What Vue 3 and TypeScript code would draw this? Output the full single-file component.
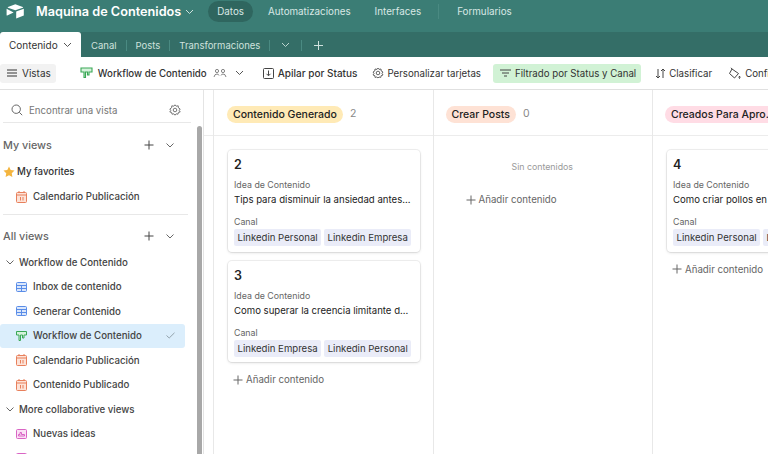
<script setup lang="ts">
interface Card {
  id: number
  idea: string
  canales: string[]
}

interface Column {
  name: string
  count: number
  color: string
  cards: Card[]
}

const columns: Column[] = [
  {
    name: 'Contenido Generado',
    count: 2,
    color: '#ffeab6',
    cards: [
      { id: 2, idea: 'Tips para disminuir la ansiedad antes...', canales: ['Linkedin Personal', 'Linkedin Empresa'] },
      { id: 3, idea: 'Como superar la creencia limitante d...', canales: ['Linkedin Empresa', 'Linkedin Personal'] },
    ],
  },
  { name: 'Crear Posts', count: 0, color: '#fee2d5', cards: [] },
  {
    name: 'Creados Para Aprobación',
    count: 1,
    color: '#ffdce5',
    cards: [{ id: 4, idea: 'Como criar pollos en casa sin experiencia previa', canales: ['Linkedin Personal', 'Linkedin Empresa'] }],
  },
]

const viewsA = [
  { icon: 'grid', label: 'Inbox de contenido' },
  { icon: 'grid', label: 'Generar Contenido' },
  { icon: 'kanban', label: 'Workflow de Contenido', active: true },
  { icon: 'cal', label: 'Calendario Publicación' },
  { icon: 'cal', label: 'Contenido Publicado' },
]
</script>

<template>
  <div class="app">
    <header class="top">
      <svg class="logo" width="19" height="15" viewBox="0 0 19 15">
        <path d="M9.3 0.3 L2 3 Q1.2 3.4 2 3.7 L9.3 6.3 L16.8 3.7 Q17.6 3.4 16.8 3 Z" fill="#fff" />
        <path d="M10.2 7.6 L10.2 14.4 L17.8 11.4 L17.8 4.8 Z" fill="#fff" />
        <path d="M0.6 4.8 L0.6 11.2 Q0.6 11.8 1.2 11.5 L7.6 8.4 Z" fill="#fff" />
      </svg>
      <span class="base-name">Maquina de Contenidos</span>
      <svg class="chev" width="9" height="6" viewBox="0 0 9 6"><path d="M1 1 L4.5 4.5 L8 1" fill="none" stroke="#cfe2de" stroke-width="1" /></svg>
      <nav class="top-nav">
        <span class="nav-item current">Datos</span>
        <span class="nav-item first">Automatizaciones</span>
        <span class="nav-item">Interfaces</span>
        <span class="nav-sep"></span>
        <span class="nav-item">Formularios</span>
      </nav>
    </header>

    <div class="tabs">
      <div class="tab active">
        Contenido
        <svg width="9" height="6" viewBox="0 0 9 6"><path d="M1 1 L4.5 4.5 L8 1" fill="none" stroke="#555" stroke-width="1" /></svg>
      </div>
      <span class="tab first-tab">Canal</span><i class="tab-sep"></i>
      <span class="tab">Posts</span><i class="tab-sep"></i>
      <span class="tab">Transformaciones</span><i class="tab-sep"></i>
      <span class="tab tab-icon"><svg width="9" height="6" viewBox="0 0 9 6"><path d="M1 1 L4.5 4.5 L8 1" fill="none" stroke="#bcd5d0" stroke-width="1" /></svg></span><i class="tab-sep"></i>
      <span class="tab tab-icon"><svg width="11" height="11" viewBox="0 0 11 11"><path d="M5.5 1 V10 M1 5.5 H10" stroke="#cfe2de" stroke-width="1" /></svg></span>
    </div>

    <div class="toolbar">
      <div class="tool views-btn">
        <svg width="10" height="8" viewBox="0 0 10 8"><path d="M0 1 H10 M0 4 H10 M0 7 H10" stroke="#333" stroke-width="1" /></svg>
        Vistas
      </div>
      <i class="tool-sep"></i>
      <div class="tool workflow">
        <svg width="13" height="12" viewBox="0 0 13 12"><path d="M1 1 H12 V5 H9 V8 H7.5 V5 H5.5 V10.5 H4 V5 H1 Z" fill="#d6f2dc" stroke="#3aa856" stroke-width="1.1" /></svg>
        <span class="tool-strong">Workflow de Contenido</span>
        <svg class="people" width="14" height="11" viewBox="0 0 14 11" fill="none" stroke="#666" stroke-width="0.8"><circle cx="4" cy="3" r="1.6" /><circle cx="10" cy="3" r="1.6" /><path d="M1 9 Q1.5 6 4 6 Q5.5 6 6 7.5 M8 7.5 Q8.5 6 10 6 Q12.5 6 13 9" /></svg>
        <svg class="people-chev" width="9" height="6" viewBox="0 0 9 6"><path d="M1 1 L4.5 4.5 L8 1" fill="none" stroke="#555" stroke-width="1" /></svg>
      </div>
      <div class="tool stack">
        <svg width="11" height="11" viewBox="0 0 11 11" fill="none" stroke="#444" stroke-width="1"><rect x="0.5" y="0.5" width="10" height="10" rx="1" /><path d="M5.5 2.5 V7.5 M3.5 5.8 L5.5 7.8 L7.5 5.8" /></svg>
        Apilar por Status
      </div>
      <div class="tool tight">
        <svg width="12" height="12" viewBox="0 0 12 12" fill="none" stroke="#555" stroke-width="0.9"><circle cx="6" cy="6" r="1.8" /><path d="M6 1 L7 2.4 L9 2 L9.2 4 L11 5 L10 6.4 L11 8 L9.2 8.6 L8.8 10.4 L7 10 L6 11 L4.8 10 L3 10.4 L2.8 8.6 L1 8 L2 6.4 L1 5 L2.8 4 L3 2 L5 2.4 Z" /></svg>
        Personalizar tarjetas
      </div>
      <div class="tool filtered">
        <svg width="11" height="8" viewBox="0 0 11 8"><path d="M0 1 H11 M2 4 H9 M4 7 H7" stroke="#444" stroke-width="1" /></svg>
        Filtrado por Status y Canal
      </div>
      <div class="tool tight sort">
        <svg width="11" height="11" viewBox="0 0 11 11" fill="none" stroke="#444" stroke-width="1"><path d="M3 1 V10 M1 8 L3 10 L5 8 M8 10 V1 M6 3 L8 1 L10 3" /></svg>
        Clasificar
      </div>
      <div class="tool">
        <svg width="13" height="13" viewBox="0 0 13 13" fill="none" stroke="#444" stroke-width="1"><path d="M4 2 L10.5 6.5 L6.5 11 L1.5 6.5 Z M4 2 L3 0.8" /><path d="M11.5 9 Q12.5 10.5 11.5 11.5 Q10.5 10.5 11.5 9" /></svg>
        Configurar
      </div>
    </div>

    <div class="body">
      <aside class="sidebar">
        <div class="search">
          <svg width="12" height="12" viewBox="0 0 12 12" fill="none" stroke="#666" stroke-width="1"><circle cx="5.2" cy="5.2" r="4.2" /><path d="M8.3 8.3 L11.2 11.2" /></svg>
          <span>Encontrar una vista</span>
          <svg class="gear" width="12" height="12" viewBox="0 0 12 12" fill="none" stroke="#666" stroke-width="0.9"><circle cx="6" cy="6" r="1.8" /><path d="M6 0.8 L7.2 2.2 L9.2 1.8 L9.4 3.8 L11.2 5 L10.2 6.4 L11.2 8 L9.4 8.4 L9 10.2 L7.2 9.8 L6 11.2 L4.8 9.8 L3 10.2 L2.6 8.4 L0.8 8 L1.8 6.4 L0.8 5 L2.6 3.8 L2.8 1.8 L4.8 2.2 Z" /></svg>
        </div>
        <div class="side-scroll">
          <div class="side-list">
            <div class="group-title">
              <span>My views</span>
              <svg class="plus" width="10" height="10" viewBox="0 0 10 10"><path d="M5 0.5 V9.5 M0.5 5 H9.5" stroke="#444" stroke-width="1" /></svg>
              <svg width="8" height="5" viewBox="0 0 8 5"><path d="M0.5 0.5 L4 4 L7.5 0.5" fill="none" stroke="#555" stroke-width="0.9" /></svg>
            </div>
            <div class="fav-row">
              <svg width="12" height="12" viewBox="0 0 24 24"><path d="M12 1 L15.4 8 L23 9.1 L17.5 14.5 L18.8 22.2 L12 18.6 L5.2 22.2 L6.5 14.5 L1 9.1 L8.6 8 Z" fill="#f4b53f" /></svg>
              My favorites
            </div>
            <div class="view-row">
              <svg width="11" height="12" viewBox="0 0 11 12" fill="#fde3d8" stroke="#e8805c" stroke-width="1"><rect x="0.5" y="1.5" width="10" height="10" rx="1" /><path d="M0.5 4 H10.5 M3 0 V2 M8 0 V2 M4.5 6 V9.5 M7 6 V9.5" /></svg>
              Calendario Publicación
            </div>
            <div class="divider"></div>
            <div class="group-title second">
              <span>All views</span>
              <svg class="plus" width="10" height="10" viewBox="0 0 10 10"><path d="M5 0.5 V9.5 M0.5 5 H9.5" stroke="#444" stroke-width="1" /></svg>
              <svg width="8" height="5" viewBox="0 0 8 5"><path d="M0.5 0.5 L4 4 L7.5 0.5" fill="none" stroke="#555" stroke-width="0.9" /></svg>
            </div>
            <div class="section-row">
              <svg width="8" height="5" viewBox="0 0 8 5"><path d="M0.5 0.5 L4 4 L7.5 0.5" fill="none" stroke="#555" stroke-width="0.9" /></svg>
              Workflow de Contenido
            </div>
            <div v-for="v in viewsA" :key="v.label" class="view-row" :class="{ active: v.active }">
              <svg v-if="v.icon === 'grid'" width="11" height="10" viewBox="0 0 11 10" fill="#dbe7fb" stroke="#5a8de8" stroke-width="1"><rect x="0.5" y="0.5" width="10" height="9" rx="1" /><path d="M0.5 3.5 H10.5 M0.5 6.5 H10.5 M5.5 3.5 V9.5" /></svg>
              <svg v-else-if="v.icon === 'kanban'" width="11" height="10" viewBox="0 0 11 10" fill="#d6f2dc" stroke="#3aa856" stroke-width="1"><path d="M0.5 0.5 H10.5 V4 H8 V7 H6.5 V4 H4.5 V9.5 H3 V4 H0.5 Z" /></svg>
              <svg v-else width="11" height="12" viewBox="0 0 11 12" fill="#fde3d8" stroke="#e8805c" stroke-width="1"><rect x="0.5" y="1.5" width="10" height="10" rx="1" /><path d="M0.5 4 H10.5 M3 0 V2 M8 0 V2 M4.5 6 V9.5 M7 6 V9.5" /></svg>
              {{ v.label }}
              <svg v-if="v.active" class="check" width="9" height="7" viewBox="0 0 9 7"><path d="M0.5 3.5 L3.2 6 L8.5 0.8" fill="none" stroke="#8a9aa3" stroke-width="0.9" /></svg>
            </div>
            <div class="section-row">
              <svg width="8" height="5" viewBox="0 0 8 5"><path d="M0.5 0.5 L4 4 L7.5 0.5" fill="none" stroke="#555" stroke-width="0.9" /></svg>
              More collaborative views
            </div>
            <div class="view-row">
              <svg width="11" height="10" viewBox="0 0 11 10" fill="#fbe0f5" stroke="#d965c4" stroke-width="1"><rect x="0.5" y="0.5" width="10" height="9" rx="1" /><path d="M2.5 7 H8.5 V5.5 H5.5 V3.5 H4 V5.5 H2.5 Z" /></svg>
              Nuevas ideas
            </div>
            <div class="view-row">
              <svg width="11" height="10" viewBox="0 0 11 10" fill="#fbe0f5" stroke="#d965c4" stroke-width="1"><rect x="0.5" y="0.5" width="10" height="9" rx="1" /></svg>
              Nuevas publicaciones
            </div>
          </div>
          <div class="scrollbar"></div>
        </div>
      </aside>

      <main class="board">
        <section v-for="col in columns" :key="col.name" class="column">
          <div class="col-head">
            <span class="pill" :style="{ background: col.color }">{{ col.name }}</span>
            <span class="count">{{ col.count }}</span>
          </div>
          <div class="col-body">
            <div v-if="!col.cards.length" class="empty">Sin contenidos</div>
            <article v-for="card in col.cards" :key="card.id" class="card">
              <div class="card-id">{{ card.id }}</div>
              <div class="label">Idea de Contenido</div>
              <div class="idea">{{ card.idea }}</div>
              <div class="label canal">Canal</div>
              <div class="chips">
                <span v-for="c in card.canales" :key="c" class="chip">{{ c }}</span>
              </div>
            </article>
            <div class="add">
              <svg width="10" height="10" viewBox="0 0 10 10"><path d="M5 0.5 V9.5 M0.5 5 H9.5" stroke="#666" stroke-width="1" /></svg>
              Añadir contenido
            </div>
          </div>
        </section>
      </main>
    </div>
  </div>
</template>

<style>
html,
body {
  margin: 0;
  overflow: hidden;
}
</style>

<style scoped>
.app {
  width: 768px;
  height: 454px;
  overflow: hidden;
  display: flex;
  flex-direction: column;
  font-family: Inter, "Liberation Sans", sans-serif;
  font-size: 9.7px;
  color: #333;
  background: #fff;
}

/* top bar */
.top {
  height: 32px;
  flex: none;
  box-sizing: border-box;
  display: flex;
  align-items: center;
  padding: 0 0 9px 6px;
  background: #3b7d75;
  color: #fff;
}

.base-name {
  margin-left: 11px;
  font-size: 12.7px;
  font-weight: 600;
}

.chev {
  margin-left: 4px;
}

.top-nav {
  margin-left: 14px;
  display: flex;
  align-items: center;
  color: #d9e8e5;
}

.nav-item {
  padding: 0 12px;
  height: 21px;
  line-height: 21px;
  border-radius: 11px;
  font-size: 9.8px;
}

.nav-item.current {
  padding: 0 9px;
  background: #2f665f;
}

.nav-item.first {
  margin-left: 3px;
}

.nav-sep {
  width: 1px;
  height: 15px;
  background: #4a8a82;
  margin: 0 6px 0 5px;
}

/* tabs */
.tabs {
  height: 25px;
  flex: none;
  box-sizing: border-box;
  padding-top: 1px;
  display: flex;
  align-items: center;
  background: #346e67;
  color: #cfe2de;
  font-size: 9.5px;
}

.tab {
  padding: 0 9px;
}

.first-tab {
  margin-left: 1px;
}

.tab.active {
  width: 81px;
  height: 25px;
  margin-top: -1px;
  box-sizing: border-box;
  padding: 1px 0 0 9px;
  display: flex;
  align-items: center;
  gap: 5px;
  background: #fff;
  color: #333;
  font-size: 10px;
  border-radius: 3px 3px 0 0;
}

.tab-icon {
  display: flex;
  align-items: center;
  padding: 0 11px;
}

.tab-sep {
  width: 1px;
  height: 11px;
  background: #4a8a82;
}

/* toolbar */
.toolbar {
  height: 33px;
  flex: none;
  box-sizing: border-box;
  display: flex;
  align-items: center;
  border-bottom: 1px solid #e0e0e0;
  gap: 6px;
  white-space: nowrap;
}

.tool {
  display: flex;
  align-items: center;
  gap: 4px;
  height: 19px;
  padding: 0 5px;
  border-radius: 3px;
}

.tool svg {
  flex: none;
}

.tool.tight {
  gap: 3px;
}

.tool.sort {
  margin-left: 3px;
}

.tool.stack {
  padding-right: 4px;
  font-size: 10px;
  font-weight: 500;
}

.views-btn {
  width: 56px;
  box-sizing: border-box;
  gap: 5px;
  padding-left: 7px;
  font-size: 10px;
  background: #f2f2f2;
}

.tool-sep {
  width: 1px;
  height: 13px;
  background: #ddd;
  margin: 0 4px 0 3px;
}

.workflow {
  gap: 5px;
  margin-right: 3px;
}

.people {
  margin-left: 1px;
}

.people-chev {
  margin-left: 3px;
}

.tool-strong {
  font-weight: 500;
}

.filtered {
  background: #d1f2d5;
  margin-left: 1px;
  padding: 0 5px 0 7px;
}

/* main */
.body {
  flex: 1;
  min-height: 0;
  display: flex;
}

.sidebar {
  width: 204px;
  flex: none;
  box-sizing: border-box;
  border-right: 1px solid #e4e4e4;
  display: flex;
  flex-direction: column;
}

.search {
  height: 33px;
  margin: 0 12px 0 3px;
  padding: 8px 0 0 8px;
  flex: none;
  box-sizing: border-box;
  display: flex;
  align-items: center;
  gap: 6px;
  color: #777;
  border-bottom: 1px solid #e8e8e8;
}

.gear {
  margin-left: auto;
  margin-right: 10px;
}

.side-scroll {
  flex: 1;
  min-height: 0;
  display: flex;
}

.side-list {
  flex: 1;
  min-width: 0;
  overflow: hidden;
}

.scrollbar {
  width: 5px;
  margin: 3px 1px 0 0;
  background: #a8a8a8;
  border-radius: 3px 3px 0 0;
}

.group-title {
  height: 24px;
  margin-top: 10px;
  display: flex;
  align-items: center;
  padding: 0 23px 0 3px;
  font-size: 10.8px;
  font-weight: 500;
  color: #666;
}

.group-title.second {
  height: 28px;
  margin-top: 7px;
}

.plus {
  margin-left: auto;
  margin-right: 12px;
}

.fav-row {
  height: 25.5px;
  margin-top: 2px;
  display: flex;
  align-items: center;
  gap: 2px;
  padding-left: 3px;
  font-weight: 500;
  color: #333;
}

.view-row {
  height: 24.5px;
  margin-right: 12px;
  display: flex;
  align-items: center;
  gap: 6px;
  padding-left: 16px;
  border-radius: 3px;
  color: #444;
  font-weight: 500;
  white-space: nowrap;
}

.view-row svg {
  flex: none;
}

.view-row.active {
  background: #dbeefc;
}

.check {
  margin-left: auto;
  margin-right: 10px;
}

.divider {
  height: 1px;
  margin: 5px 9px 0 3px;
  background: #e8e8e8;
}

.section-row {
  height: 24.5px;
  display: flex;
  align-items: center;
  gap: 5px;
  padding-left: 6px;
  font-weight: 500;
  color: #444;
}

/* board */
.board {
  flex: 1;
  min-width: 0;
  display: flex;
  overflow: hidden;
  padding-left: 9px;
  background: linear-gradient(#fff 45px, #ececec 45px, #ececec 46px, #fff 46px);
}

.column {
  width: 219.5px;
  flex: none;
  box-sizing: border-box;
  border-left: 1px solid #e8e8e8;
}

.col-head {
  height: 46px;
  box-sizing: border-box;
  padding: 16px 0 0 13px;
  display: flex;
  align-items: flex-start;
  gap: 7px;
  border-bottom: 1px solid #ececec;
}

.column + .column .col-head {
  padding-left: 12px;
}

.pill {
  height: 17px;
  line-height: 17px;
  padding: 0 6px;
  border-radius: 9px;
  font-size: 10.5px;
  font-weight: 500;
  color: #222;
  white-space: nowrap;
  max-width: 105px;
  overflow: hidden;
  text-overflow: ellipsis;
  flex: none;
}

.count {
  line-height: 16px;
  color: #888;
  font-size: 10.5px;
}

.col-body {
  padding: 14px 0 0 14px;
}

.empty {
  height: 21px;
  margin-top: 11px;
  margin-right: 15px;
  text-align: center;
  font-size: 8.8px;
  color: #999;
}

.empty + .add {
  padding-left: 18px;
}

.card {
  width: 192px;
  box-sizing: border-box;
  height: 101.5px;
  margin-bottom: 9px;
  padding: 7px 6px 0;
  border-radius: 4px;
  background: #fff;
  box-shadow: 0 0 0 1px rgba(0, 0, 0, 0.06), 0 1px 3px rgba(0, 0, 0, 0.12);
}

.card-id {
  font-size: 12.5px;
  font-weight: 600;
  line-height: 15px;
  color: #222;
}

.label {
  margin-top: 7px;
  font-size: 8.8px;
  line-height: 12px;
  color: #666;
}

.label.canal {
  margin-top: 10px;
}

.idea {
  margin-top: 2px;
  font-size: 9.6px;
  line-height: 13px;
  color: #222;
  white-space: nowrap;
  overflow: hidden;
  text-overflow: ellipsis;
}

.chips {
  margin-top: 1px;
  display: flex;
  gap: 3px;
}

.chip {
  flex: none;
  height: 17px;
  line-height: 17px;
  padding: 0 3.5px;
  border-radius: 2px;
  background: #eaecf8;
  font-size: 9.6px;
  color: #333;
  white-space: nowrap;
}

.add {
  margin-top: 12px;
  padding-left: 5px;
  display: flex;
  align-items: center;
  gap: 3px;
  color: #666;
  font-size: 9.7px;
}
</style>
